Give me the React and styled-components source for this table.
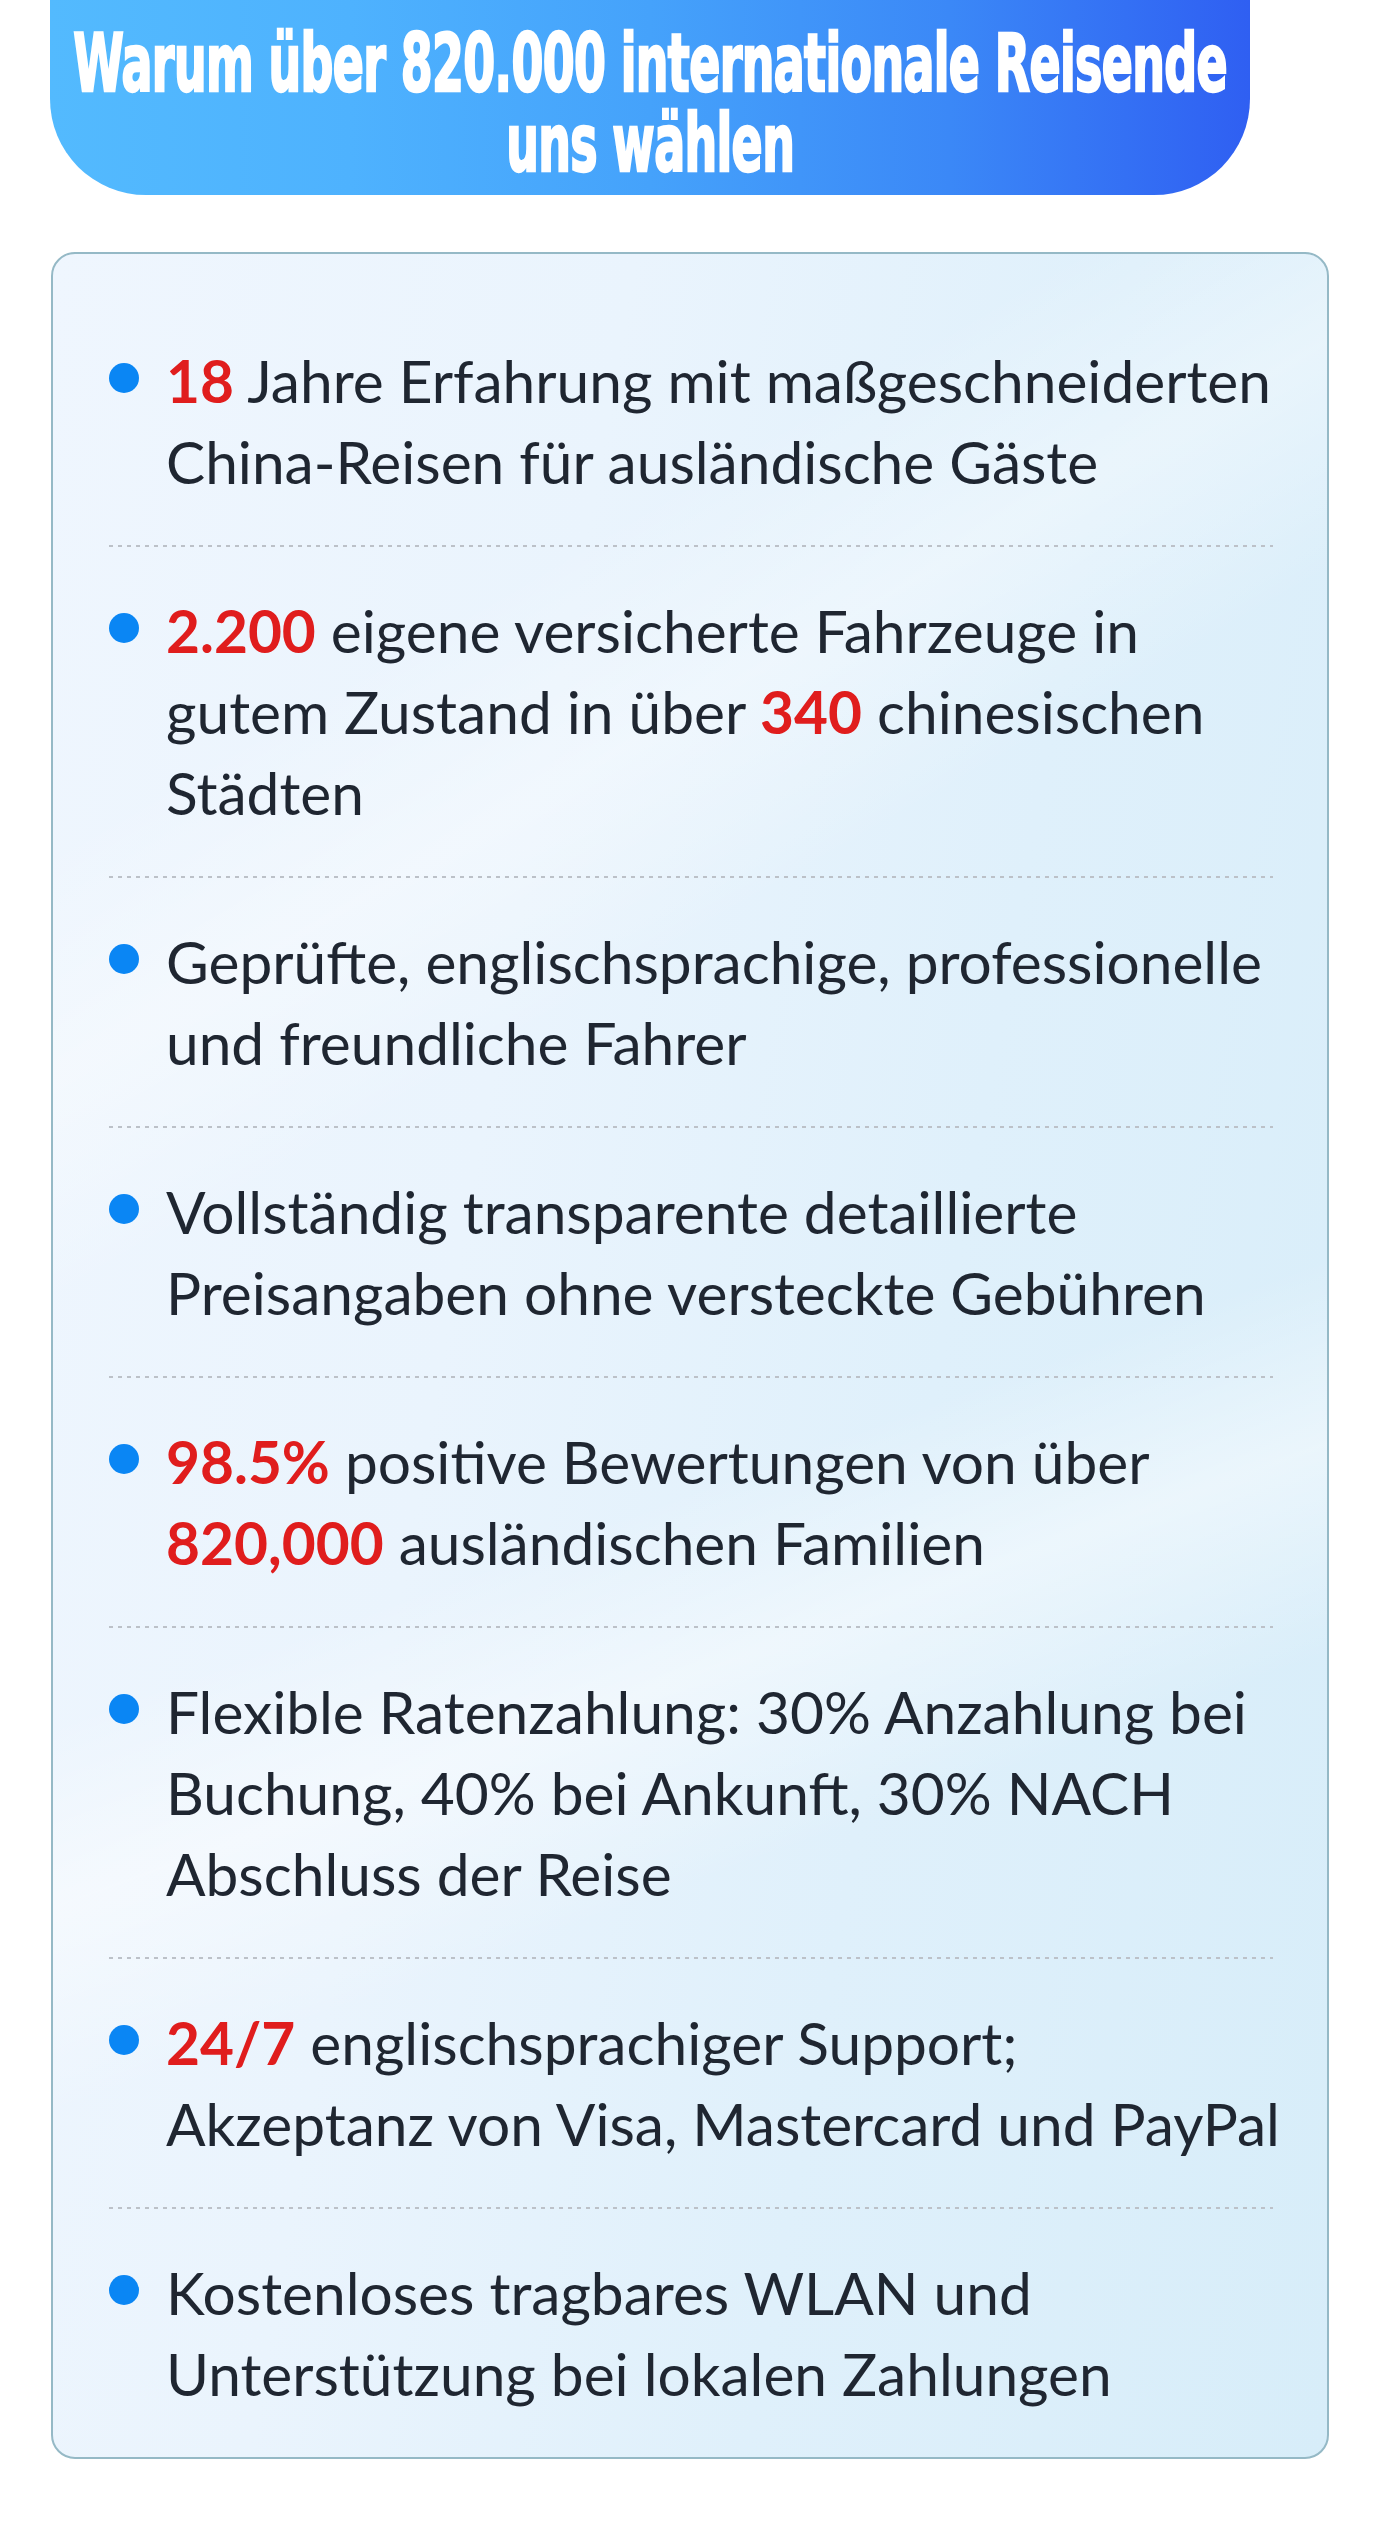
import React from "react";
import styled, { createGlobalStyle } from "styled-components";

const GlobalStyle = createGlobalStyle`
  body {
    margin: 0;
    background: #ffffff;
    font-family: Lato, "Noto Sans", sans-serif;
  }
`;

const Page = styled.div`
  width: 1380px;
  padding: 0 0 60px;
`;

const Banner = styled.header`
  margin-left: 50px;
  width: 1200px;
  height: 195px;
  box-sizing: border-box;
  padding-top: 24px;
  border-radius: 0 0 96px 96px;
  background: linear-gradient(90deg, #53bafe 0%, #4eb2fe 25%, #45a2fb 50%, #3b88f7 75%, #2f5ff2 100%);
`;

/* condensed display face: no narrow heavy font installed, so squeeze a bold one */
const Title = styled.h1`
  display: flex;
  justify-content: center;
  margin: 0;
  text-align: center;
  color: #ffffff;
  font-family: "DejaVu Sans Condensed", "DejaVu Sans", sans-serif;
  font-weight: 700;
  font-size: 80px;
  line-height: 80px;
  letter-spacing: -1px;
  -webkit-text-stroke: 2.5px #ffffff;
`;

const TitleInner = styled.span`
  flex: none;
  display: block;
  transform: scaleX(0.638);
  white-space: nowrap;
`;

const Card = styled.section`
  margin: 57px 0 0 51px;
  width: 1278px;
  box-sizing: border-box;
  padding: 43px 54px 0 56px;
  border: 2px solid #95b9c6;
  border-radius: 24px;
  background:
    linear-gradient(160deg, transparent 55%, rgba(255, 255, 255, 0.45) 62%, transparent 70%),
    linear-gradient(150deg, transparent 20%, rgba(255, 255, 255, 0.35) 28%, transparent 36%),
    linear-gradient(100deg, #eff6fe 0%, #eaf4fd 35%, #dff0fb 65%, #d7edf9 100%);
`;

const Item = styled.div`
  display: flex;
  align-items: flex-start;
  gap: 27px;
  padding: 43px 0;
`;

const Dot = styled.span`
  flex: none;
  width: 30px;
  height: 30px;
  margin-top: 23px;
  border-radius: 50%;
  background: #0a86f4;
`;

const Text = styled.div`
  font-family: Lato, "Noto Sans", sans-serif;
  font-size: 58.6px;
  line-height: 81px;
  color: #1f2631;
`;

const Line = styled.span`
  display: block;
  white-space: nowrap;
`;

const Hl = styled.b`
  color: #e01d1d;
  font-weight: 700;
`;

const Divider = styled.div`
  height: 2px;
  background-image: linear-gradient(90deg, #bcc1c8 50%, transparent 50%);
  background-size: 9px 2px;
  background-repeat: repeat-x;
`;

// the eight selling points, one entry per rendered line
const items = [
  [
    <><Hl>18</Hl> Jahre Erfahrung mit maßgeschneiderten</>,
    "China-Reisen für ausländische Gäste",
  ],
  [
    <><Hl>2.200</Hl> eigene versicherte Fahrzeuge in</>,
    <>gutem Zustand in über <Hl>340</Hl> chinesischen</>,
    "Städten",
  ],
  ["Geprüfte, englischsprachige, professionelle", "und freundliche Fahrer"],
  ["Vollständig transparente detaillierte", "Preisangaben ohne versteckte Gebühren"],
  [
    <><Hl>98.5%</Hl> positive Bewertungen von über</>,
    <><Hl>820,000</Hl> ausländischen Familien</>,
  ],
  [
    "Flexible Ratenzahlung: 30% Anzahlung bei",
    "Buchung, 40% bei Ankunft, 30% NACH",
    "Abschluss der Reise",
  ],
  [
    <><Hl>24/7</Hl> englischsprachiger Support;</>,
    "Akzeptanz von Visa, Mastercard und PayPal",
  ],
  ["Kostenloses tragbares WLAN und", "Unterstützung bei lokalen Zahlungen"],
];

export default function App() {
  return (
    <>
      <GlobalStyle />
      <Page>
        <Banner>
          <Title>
            <TitleInner>
              Warum über 820.000 internationale Reisende
              <br />
              uns wählen
            </TitleInner>
          </Title>
        </Banner>

        <Card>
          {items.map((lines, i) => (
            <React.Fragment key={i}>
              {i > 0 && <Divider />}
              <Item>
                <Dot />
                <Text>
                  {lines.map((line, j) => (
                    <Line key={j}>{line}</Line>
                  ))}
                </Text>
              </Item>
            </React.Fragment>
          ))}
        </Card>
      </Page>
    </>
  );
}
